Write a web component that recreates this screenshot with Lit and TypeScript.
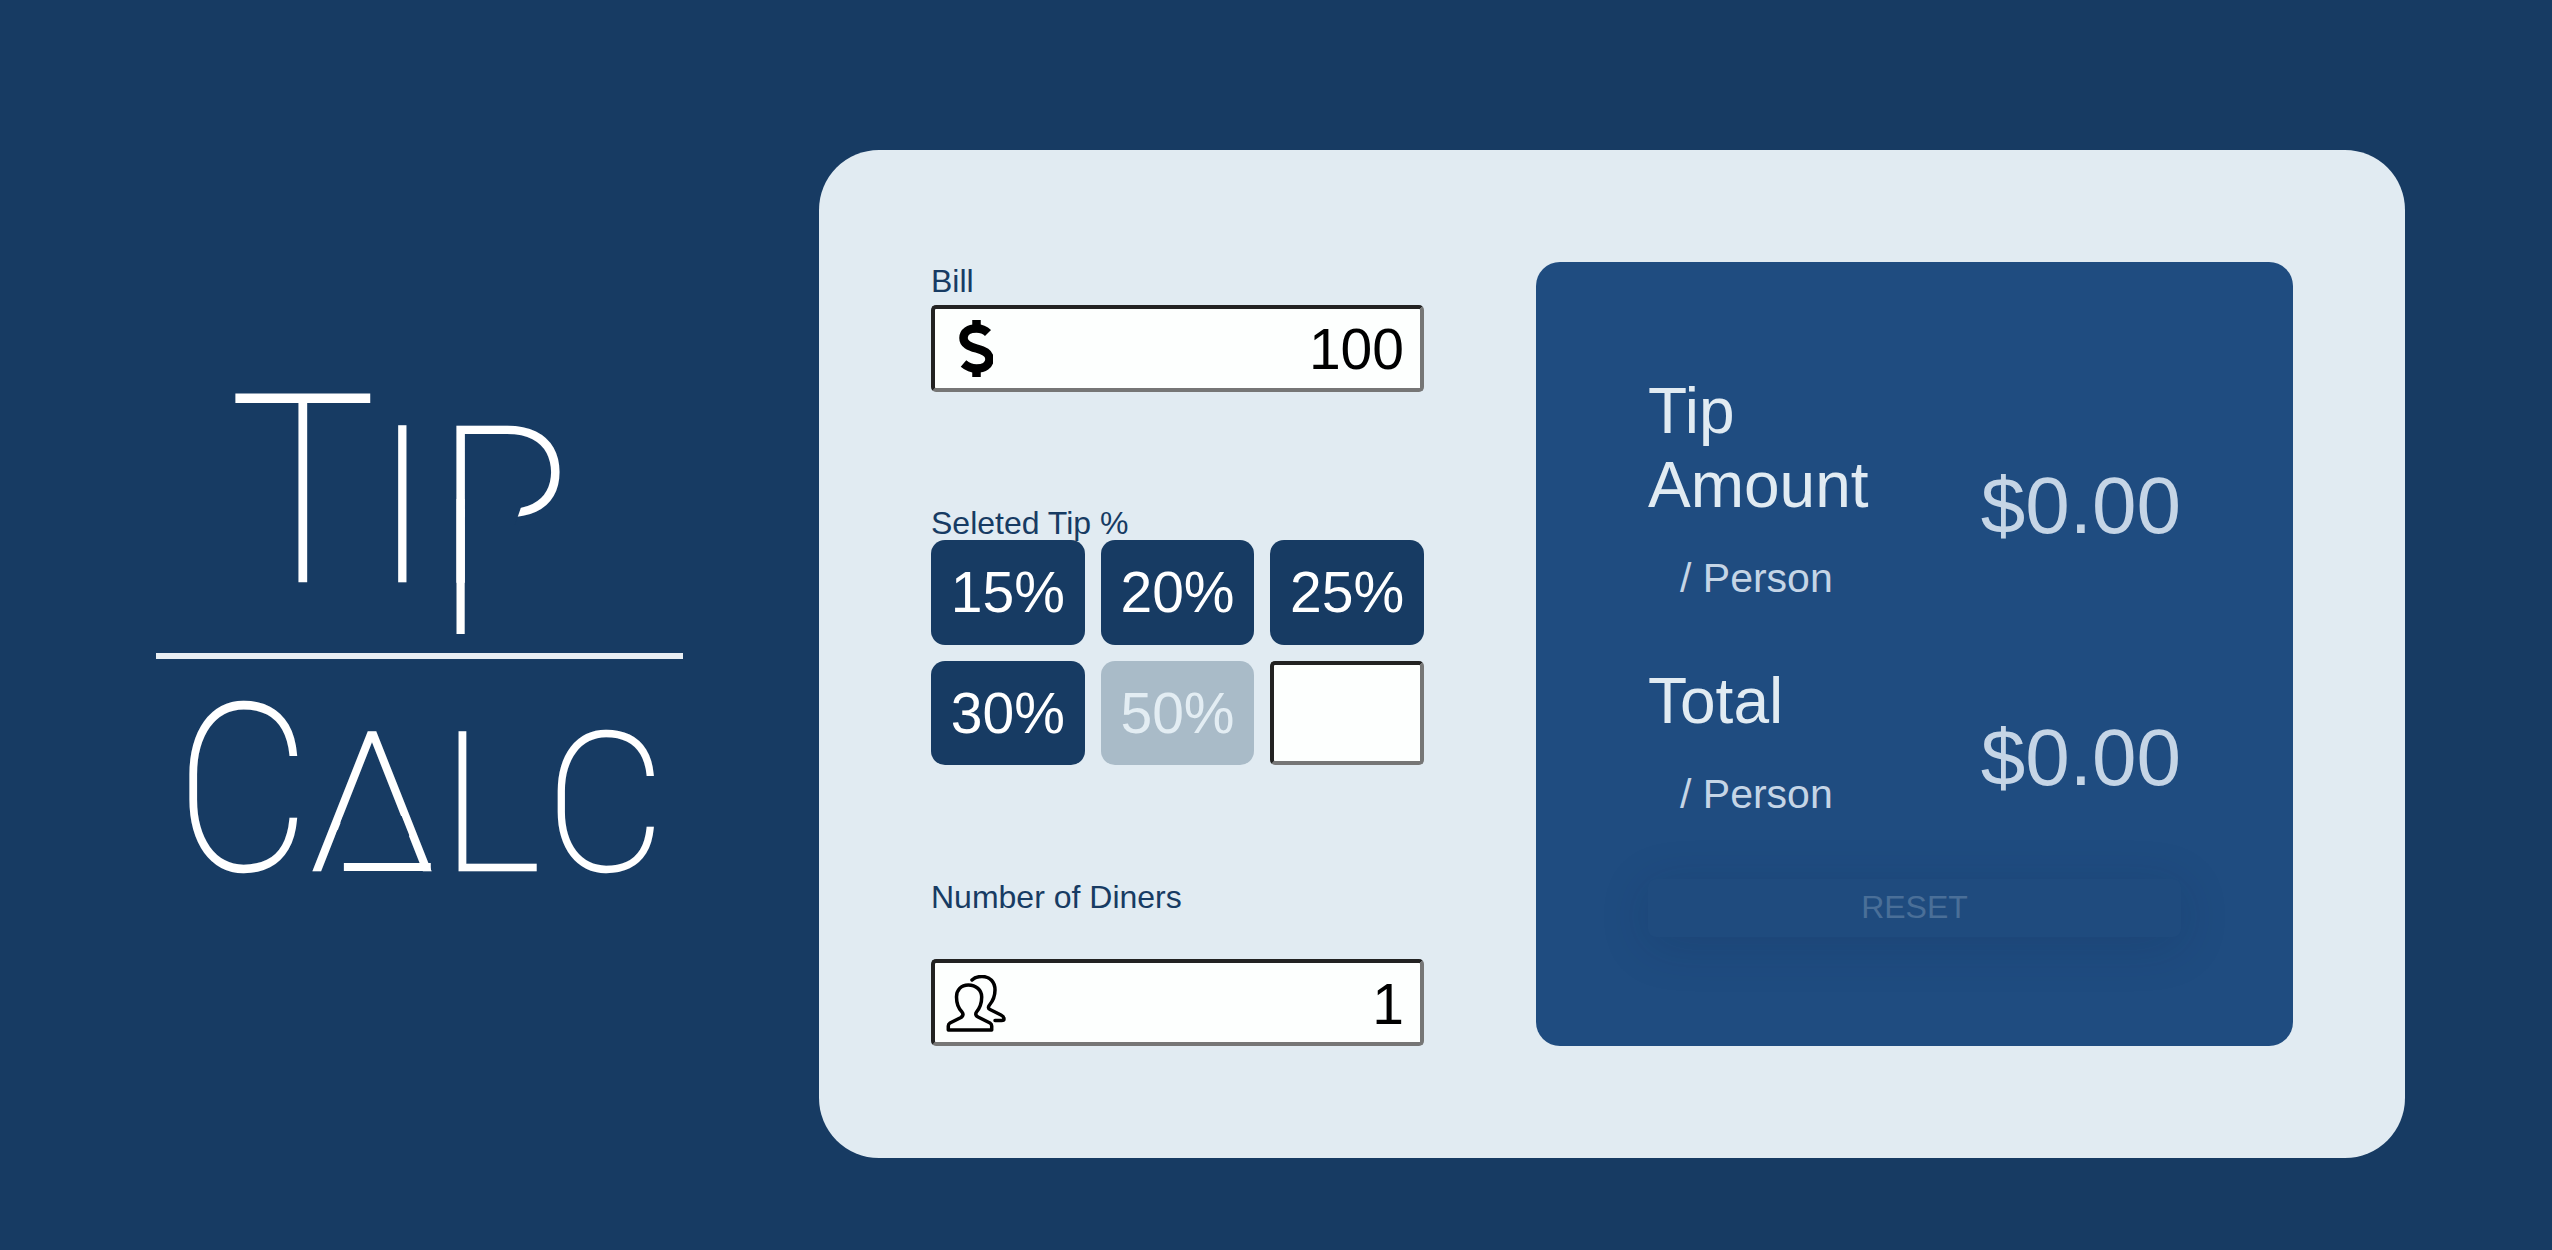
import { LitElement, html, css } from "lit";
import { customElement } from "lit/decorators.js";

@customElement("app-root")
export class AppRoot extends LitElement {
  static styles = css`
    :host { display: block; font-family: "Liberation Sans", Arial, sans-serif; }
    * { box-sizing: border-box; }
    .page { display: flex; width: 2552px; height: 1250px; background: #173b63; overflow: hidden; }
    .logo { flex: none; width: 819px; padding-top: 361px; color: #fff; font-family: Roboto, sans-serif; font-weight: 100; }
    .row { display: flex; align-items: baseline; }
    .row1 { padding-left: 230px; height: 262px; }
    .rule { width: 527px; height: 6px; margin: 30px 0 16px 156px; background: #e9eef3; }
    .row2 { padding-left: 175.6px; }
    .l { display: block; position: relative; line-height: 1; transform-origin: left bottom; -webkit-text-stroke: 2.5px #fff; }
    .t { font-size: 262px; width: 144px; transform: scaleX(0.93); }
    .i { font-size: 217px; width: 62.4px; }
    .p { font-size: 217px; width: 120px; transform: scaleX(1.025); }
    .p::before { content: ""; position: absolute; left: 28px; top: 106px; width: 55.7px; height: 20px; background: #173b63; clip-path: polygon(0 0, 100% 0, 88% 100%, 0 100%); }
    .p::after { content: ""; position: absolute; left: 19.9px; top: 100px; width: 8.3px; height: 134.5px; background: #fff; }
    .c { font-size: 232px; width: 135.8px; transform: scaleX(0.89); }
    .a { font-size: 193px; width: 129.6px; transform: scaleX(1.06); }
    .a::before { content: ""; position: absolute; left: 23px; top: 108px; width: 70px; height: 20px; background: #173b63; clip-path: polygon(7.5px 0, 62.5px 0, 100% 100%, 0 100%); }
    .a::after { content: ""; position: absolute; left: 31.3px; top: 155.3px; width: 82px; height: 7.5px; background: #fff; }
    .ll { font-size: 193px; width: 104.6px; }
    .c2 { font-size: 193px; width: 110px; transform: scaleX(0.95); }
    .card { flex: none; display: grid; grid-template-columns: 493px 757px; justify-content: space-between; width: 1586px; height: 1008px; margin-top: 150px; padding: 112px; background: #e1ebf2; border-radius: 60px; }
    .form { padding-top: 2px; color: #173b63; }
    .label { font-size: 32px; line-height: 34.5px; }
    .label.bill { margin-bottom: 6.5px; }
    .label.tip { margin-top: 113.5px; }
    .label.diners { margin-top: 115px; margin-bottom: 44px; }
    .field { display: flex; align-items: center; justify-content: space-between; height: 87px; padding: 0 16px 0 24px; background: #fdfffe; border: 4px solid; border-color: #222 #767676 #767676 #222; border-radius: 5px; color: #000; font-size: 57px; }
    .field.people { padding-left: 10px; padding-top: 3px; }
    .field.people svg { margin-top: 2px; }
    .grid { display: grid; grid-template-columns: repeat(3, 1fr); grid-auto-rows: 104.5px; gap: 16px; }
    .btn { display: flex; align-items: center; justify-content: center; background: #173b63; color: #fff; border-radius: 14px; font-size: 57px; }
    .btn.off { background: #a9bbc8; color: #e3edf3; }
    .blank { background: #fdfffe; border: 4px solid; border-color: #222 #767676 #767676 #222; border-radius: 5px; }
    .panel { height: 784px; padding: 112px 112px 0; background: #1f4c80; border-radius: 24px; color: #e1ebf2; }
    .result { display: flex; justify-content: space-between; align-items: center; }
    .result + .result { margin-top: 61.5px; }
    .name { font-size: 64px; }
    .per { margin-top: 33px; padding-left: 32px; font-size: 41px; color: #c5d5e6; }
    .amount { padding-top: 35px; font-size: 80px; color: #c5d5e6; }
    .reset { display: flex; align-items: center; justify-content: center; height: 58px; margin-top: 61px; background: #1f4b7e; border-radius: 8px; color: #4a6f98; font-size: 32px; box-shadow: 0 8px 50px rgba(12, 30, 60, 0.16); }
    svg { display: block; flex: none; fill: none; stroke: #000; }
  `;

  render() {
    return html`
      <div class="page">
        <div class="logo">
          <div class="row row1"><span class="l t">T</span><span class="l i">I</span><span class="l p">P</span></div>
          <div class="rule"></div>
          <div class="row row2"><span class="l c">C</span><span class="l a">A</span><span class="l ll">L</span><span class="l c2">C</span></div>
        </div>
        <main class="card">
          <div class="form">
            <div class="label bill">Bill</div>
            <div class="field">
              <svg width="34" height="57" viewBox="0 0 34 57" stroke-width="8.5">
                <path d="M29 13C26 10 22 8.5 17.5 8.5C10 8.5 4.5 12 4.5 18C4.5 24 10 26.5 17.5 28.5C25 30.5 30.5 33 30.5 39C30.5 45 25 48.5 17.5 48.5C12.5 48.5 8 46.5 4.5 43.5"/>
                <path d="M17.5 0V9M17.5 48V57"/>
              </svg>
              <span>100</span>
            </div>
            <div class="label tip">Seleted Tip %</div>
            <div class="grid">
              <div class="btn">15%</div><div class="btn">20%</div><div class="btn">25%</div>
              <div class="btn">30%</div><div class="btn off">50%</div><div class="blank"></div>
            </div>
            <div class="label diners">Number of Diners</div>
            <div class="field people">
              <svg width="62" height="60" viewBox="0 0 62 60" stroke-width="3.5" stroke-linejoin="round" stroke-linecap="round">
                <path d="M23.3 10C16 10 11.5 15 11.5 22C11.5 30 14 34 17 37C18.5 39 18 41 16 42.5L5 48Q3.3 49 3.3 51L3.3 55L46.7 55L46.7 51Q46.7 49 45 48L33 42C31 41 30 39 31.5 37C34 34 36.7 30 36.7 22C36.7 15 31 10 23.3 10Z"/>
                <path d="M27 5C29 3 33 1.5 37 1.5C45 1.5 50 7 50 15C50 22 47 27 44.5 30C43 32 43 33.5 45 34.5L56 40Q59 41.5 59 44Q59 45.5 56.5 45.5L50 45.5"/>
              </svg>
              <span>1</span>
            </div>
          </div>
          <section class="panel">
            <div class="result">
              <div><div class="name">Tip<br />Amount</div><div class="per">/ Person</div></div>
              <div class="amount">$0.00</div>
            </div>
            <div class="result">
              <div><div class="name">Total</div><div class="per">/ Person</div></div>
              <div class="amount">$0.00</div>
            </div>
            <div class="reset">RESET</div>
          </section>
        </main>
      </div>
    `;
  }
}
